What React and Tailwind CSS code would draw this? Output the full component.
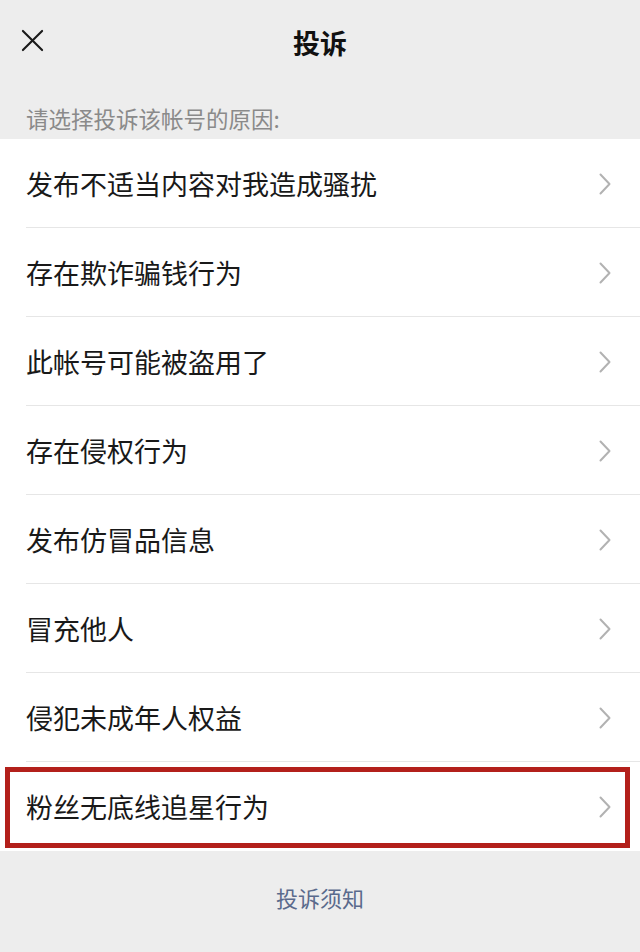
import React from 'react';

const reasons = [
  '发布不适当内容对我造成骚扰',
  '存在欺诈骗钱行为',
  '此帐号可能被盗用了',
  '存在侵权行为',
  '发布仿冒品信息',
  '冒充他人',
  '侵犯未成年人权益',
  '粉丝无底线追星行为',
];

const Chevron = () => (
  <svg className="w-[12px] h-[22px]" viewBox="0 0 12 22" fill="none">
    <path d="M1.5 1.5 L10.5 11 L1.5 20.5" stroke="#b2b2b2" strokeWidth="2" strokeLinecap="round" strokeLinejoin="round" />
  </svg>
);

const App = () => {
  return (
    <div className="w-[640px] h-[952px] bg-[#ededed] flex flex-col font-['Noto_Sans_CJK_SC','Noto_Sans',sans-serif]">
      {/* top bar */}
      <div className="relative h-[84px] flex items-center justify-center">
        <button className="absolute left-[20px] top-[28px] w-[24px] h-[24px] flex items-center justify-center">
          <svg className="w-[23px] h-[23px]" viewBox="0 0 24 24" fill="none">
            <path d="M2 2 L22 22 M22 2 L2 22" stroke="#1a1a1a" strokeWidth="2.2" strokeLinecap="round" />
          </svg>
        </button>
        <h1 className="text-[27px] font-bold text-[#111] leading-none">投诉</h1>
      </div>

      <div className="h-[55px] px-[26px] pt-[22px]">
        <p className="text-[22.5px] leading-[24px] text-[#8a8a8a]">请选择投诉该帐号的原因:</p>
      </div>

      {/* list */}
      <ul className="bg-white">
        {reasons.map((text, i) => {
          const last = i === reasons.length - 1;
          return (
            <li key={text} className="relative h-[89px] flex items-center pl-[26px] pr-[29px]">
              <span className="flex-1 text-[27px] leading-none text-[#191919]">{text}</span>
              <Chevron />
              {!last && <div className="absolute left-[26px] right-0 bottom-0 h-px bg-[#e6e6e6]" />}
              {last && (
                <div className="absolute left-[5px] top-[5px] w-[625px] h-[81px] border-[5px] border-[#b3201b]" />
              )}
            </li>
          );
        })}
      </ul>

      <div className="flex-1 flex justify-center pt-[32px]">
        <span className="text-[22px] leading-[28px] text-[#5a6a8c]">投诉须知</span>
      </div>
    </div>
  );
};

export default App;
